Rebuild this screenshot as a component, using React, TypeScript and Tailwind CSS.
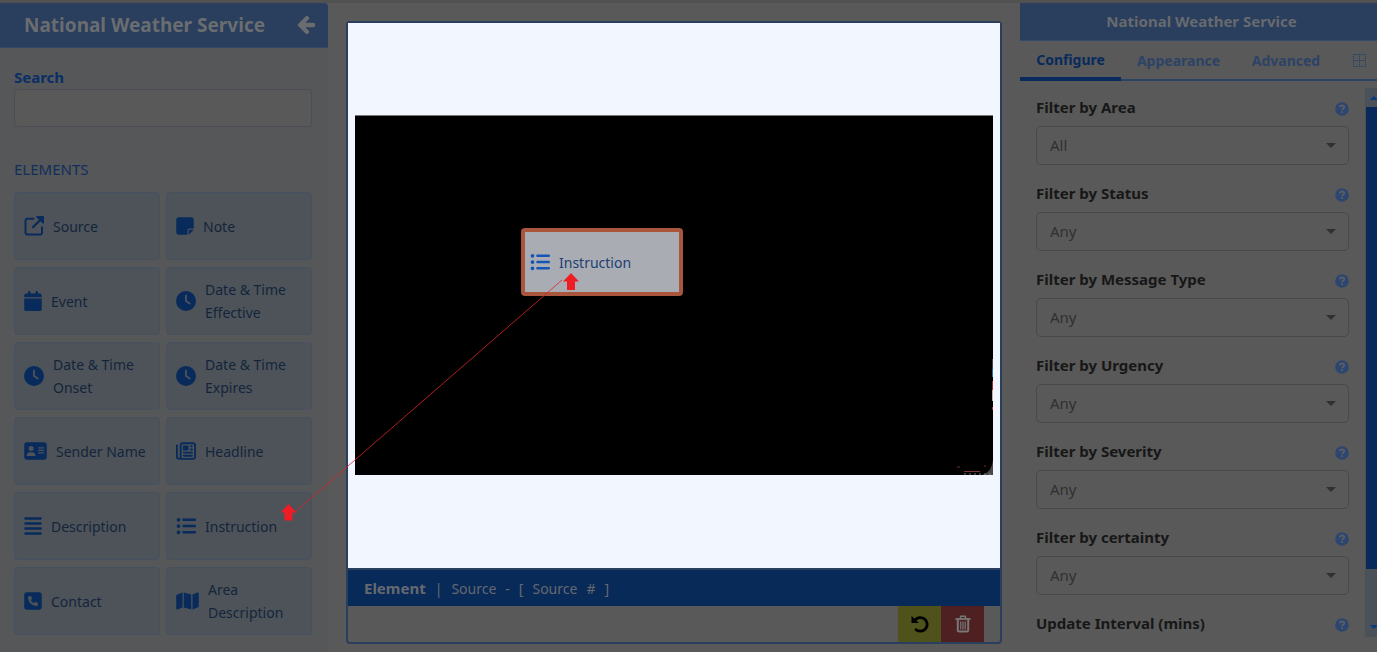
import type { ComponentType } from "react";
import {
  FaAddressCard,
  FaAlignJustify,
  FaCalendar,
  FaClock,
  FaListUl,
  FaMap,
  FaNoteSticky,
  FaRegNewspaper,
  FaSquarePhone,
} from "react-icons/fa6";

type Icon = ComponentType<{ className?: string }>;

function ExternalLinkIcon({ className }: { className?: string }) {
  return (
    <svg viewBox="0 0 20 20" className={className} fill="none" aria-hidden="true">
      <path
        d="M9.500 2.700H3.300A1.800 1.800 0 0 0 1.500 4.500v12.200a1.800 1.800 0 0 0 1.800 1.800h12.900a1.800 1.800 0 0 0 1.800-1.800v-5.500"
        stroke="currentColor"
        strokeWidth="2"
        strokeLinecap="round"
      />
      <path d="M9 11.200 17 3.200" stroke="currentColor" strokeWidth="2.200" strokeLinecap="round" />
      <path d="M12.800 0H19q1 0 1 1v6.200q-.300 1-1.200.400L12.400 1.200Q11.900.300 12.800 0Z" fill="currentColor" />
    </svg>
  );
}

const elements: { label: string; icon: Icon; width: string }[] = [
  { label: "Source", icon: ExternalLinkIcon, width: "w-5" },
  { label: "Note", icon: FaNoteSticky, width: "w-[18px]" },
  { label: "Event", icon: FaCalendar, width: "w-[18px]" },
  { label: "Date & Time Effective", icon: FaClock, width: "w-5" },
  { label: "Date & Time Onset", icon: FaClock, width: "w-5" },
  { label: "Date & Time Expires", icon: FaClock, width: "w-5" },
  { label: "Sender Name", icon: FaAddressCard, width: "w-[23px]" },
  { label: "Headline", icon: FaRegNewspaper, width: "w-5" },
  { label: "Description", icon: FaAlignJustify, width: "w-[18px]" },
  { label: "Instruction", icon: FaListUl, width: "w-5" },
  { label: "Contact", icon: FaSquarePhone, width: "w-[18px]" },
  { label: "Area Description", icon: FaMap, width: "w-[23px]" },
];

const filters = [
  { id: "area", label: "Filter by Area", value: "All" },
  { id: "status", label: "Filter by Status", value: "Any" },
  { id: "message-type", label: "Filter by Message Type", value: "Any" },
  { id: "urgency", label: "Filter by Urgency", value: "Any" },
  { id: "severity", label: "Filter by Severity", value: "Any" },
  { id: "certainty", label: "Filter by certainty", value: "Any" },
];

function ElementsPanel() {
  return (
    <aside className="flex w-[328px] shrink-0 flex-col rounded-tr bg-[#555759]">
      <header className="flex h-[45px] items-center justify-between rounded-tr border-b border-[#344661] bg-[#2a3e5d] pr-[13px] pl-6 text-[#6a6d70]">
        <h1 className="text-[19px] font-bold whitespace-nowrap">National Weather Service</h1>
        <button aria-label="Back">
          <svg viewBox="0 -64 1536 1536" className="size-[18px]" fill="currentColor" aria-hidden="true">
            <path d="M1536 640v128q0 53-32.500 90.500t-84.500 37.500h-704l293 294q38 36 38 90t-38 90l-75 76q-37 37-90 37-52 0-91-37l-651-652q-37-37-37-90 0-52 37-91l651-650q38-38 91-38 52 0 90 38l75 74q38 38 38 91t-38 91l-293 293h704q52 0 84.500 37.500t32.500 90.500z" />
          </svg>
        </button>
      </header>
      <div className="pt-[17px] pr-4 pl-[14px]">
        <label htmlFor="search" className="block text-[15px] leading-6 font-bold text-[#0a2f66]">
          Search
        </label>
        <input
          id="search"
          type="text"
          className="block h-[38px] w-full rounded border border-[#4b4e52] bg-[#595959] px-3 text-[15px] text-[#222] outline-none"
        />
        <h2 className="mt-[30px] text-[15px] leading-6 text-[#122f5c]">ELEMENTS</h2>
        <div className="mt-[11px] grid grid-cols-2 gap-x-[6px] gap-y-[7px]">
          {elements.map(({ label, icon: Glyph, width }) => (
            <button
              key={label}
              className="flex h-[68px] items-center gap-[9px] rounded border border-[#465160] bg-[#4d5359] pr-2 pl-[9px] text-left text-[14px] leading-[23px] text-[#14253b]"
            >
              <Glyph className={`h-5 shrink-0 text-[#082b5c] ${width}`} />
              <span>{label}</span>
            </button>
          ))}
        </div>
      </div>
    </aside>
  );
}

function Workspace() {
  return (
    <main className="mx-[18px] mt-[18px] mb-2 flex min-w-0 flex-1 flex-col rounded border-2 border-[#2a3e5d]">
      <div className="flex flex-1 flex-col bg-[#f2f7ff] px-[7px] pt-[92px] pb-[93px]">
        <div className="relative flex-1 border-t border-[#777] bg-black">
          <div className="absolute top-[112px] left-[166px] flex h-[68px] w-[162px] items-center gap-[9px] rounded border-4 border-[#a9563d] bg-[#a9adb3] pl-[5px] text-[14px] text-[#1d3d73]">
            <FaListUl className="size-5 text-[#1455b5]" />
            <span>Instruction</span>
          </div>
          <svg className="absolute right-0 bottom-0 h-[120px] w-10" viewBox="0 0 40 120" aria-hidden="true">
            <path d="M39.500 4v10" stroke="#444" />
            <path d="M39.500 14v8" stroke="#2f6a9c" />
            <path d="M39.500 26v9" stroke="#a32b2b" />
            <path d="M39.500 35v11" stroke="#b8b2a8" />
            <path d="M39.500 52v3" stroke="#a32b2b" />
            <path d="M40 105v15h-11q10-3 11-15Z" fill="#484848" />
            <path d="M11 116.500h16" stroke="#7c3434" />
            <path d="M11 119h28" stroke="#777" strokeDasharray="2 3" />
            <path d="M4 112h3M31 111h2" stroke="#6b3030" />
          </svg>
        </div>
      </div>
      <div className="flex h-[38px] items-center gap-[9px] border-t-2 border-[#2a3e5d] bg-[#082a59] px-4 text-[14px] text-[#65696f]">
        <strong className="text-[15px] font-bold">Element</strong>
        <span>|</span>
        <span>Source</span>
        <span>-</span>
        <span>[</span>
        <span>Source</span>
        <span>#</span>
        <span>]</span>
      </div>
      <div className="flex h-9 justify-end pr-4">
        <button aria-label="Undo" className="flex w-[43px] items-center justify-center bg-[#4f521a] text-black">
          <svg viewBox="0 0 20 20" className="size-5" fill="none" aria-hidden="true">
            <path d="M4.500 7A6.800 6.800 0 1 1 5.200 14.800" stroke="currentColor" strokeWidth="2.800" />
            <path d="M1.500 1.800V9h7.300Z" fill="currentColor" />
          </svg>
        </button>
        <button aria-label="Delete" className="flex w-[43px] items-center justify-center bg-[#4e2022] text-[#777]">
          <svg viewBox="0 0 16 18" className="h-[18px] w-4" fill="none" stroke="currentColor" aria-hidden="true">
            <path d="M.500 4h15" strokeWidth="1.800" />
            <path d="M5 4l.800-2.800h4.400L11 4" strokeWidth="1.500" />
            <path d="M2.800 4v11q0 1.500 1.500 1.500h7.400q1.500 0 1.500-1.500V4" strokeWidth="2" />
            <path d="M5.800 6.500v8M8 6.500v8M10.200 6.500v8" strokeWidth="1.200" />
          </svg>
        </button>
      </div>
    </main>
  );
}

function HelpButton({ about }: { about: string }) {
  return (
    <button aria-label={`Help: ${about}`} className="pt-1">
      <svg viewBox="0 0 14 14" className="size-[14px]" fill="none" aria-hidden="true">
        <circle cx="7" cy="7" r="6.800" fill="#2c4670" />
        <path d="M4.800 5.400Q5 3.500 7 3.500q2.200 0 2.200 1.900c0 1.400-2.100 1.400-2.100 2.900" stroke="#5b5e63" strokeWidth="1.800" />
        <path d="M6.100 9.300H8v1.800H6.100Z" fill="#5b5e63" />
      </svg>
    </button>
  );
}

function SettingsPanel() {
  return (
    <aside className="flex w-[357px] shrink-0 flex-col">
      <header className="flex h-[38px] items-center justify-center border-b border-[#344b70] bg-[#2a3e5d] pl-[6px]">
        <h2 className="text-[15px] font-bold text-[#676a6e]">National Weather Service</h2>
      </header>
      <nav className="flex h-10 border-b-2 border-[#2c4367] text-[14px] font-bold text-[#2c4367]">
        <a href="#configure" className="-mb-[2px] flex w-[101px] items-center justify-center border-b-4 border-[#082a5c] text-[#082a5c]">
          Configure
        </a>
        <a href="#appearance" className="flex w-[115px] items-center justify-center">
          Appearance
        </a>
        <a href="#advanced" className="flex w-[100px] items-center justify-center">
          Advanced
        </a>
        <a href="#grid" aria-label="Grid" className="flex flex-1 items-center justify-center pl-[6px]">
          <svg viewBox="0 0 13 13" className="size-[13px]" stroke="currentColor" aria-hidden="true">
            <path
              d="M0 .500h13M0 6.500h13M0 12.500h13M.500 0v13M6.500 0v13M12.500 0v13"
              strokeDasharray="1.400 .600"
            />
          </svg>
        </a>
      </nav>
      <div className="flex min-h-0 flex-1">
        <form className="flex min-w-0 flex-1 flex-col gap-4 overflow-hidden pt-[14px] pr-4 pl-4">
          {filters.map(({ id, label, value }) => (
            <div key={id} className="shrink-0">
              <div className="flex h-6 items-center justify-between">
                <label htmlFor={id} className="text-[15px] leading-6 font-bold text-[#171717]">
                  {label}
                </label>
                <HelpButton about={label} />
              </div>
              <div className="relative mt-[7px]">
                <select
                  id={id}
                  className="block h-[39px] w-full appearance-none rounded-[5px] border border-[#494949] bg-[#595959] px-[13px] text-[15px] text-[#303030] outline-none"
                >
                  <option>{value}</option>
                </select>
                <svg className="pointer-events-none absolute top-[17px] right-[13px] h-[5px] w-[10px]" viewBox="0 0 10 5" aria-hidden="true">
                  <path d="M0 0h10L5 5Z" fill="#303030" />
                </svg>
              </div>
            </div>
          ))}
          <div className="flex h-6 shrink-0 items-center justify-between">
            <h3 className="text-[15px] leading-6 font-bold text-[#171717]">Update Interval (mins)</h3>
            <HelpButton about="Update Interval (mins)" />
          </div>
        </form>
        <div className="mt-[7px] mb-[15px] flex w-3 flex-col overflow-hidden bg-[#4a5159]">
          <svg className="h-[19px] w-[18px] shrink-0" viewBox="0 0 18 19" aria-hidden="true">
            <path d="M5 12h8L9 8Z" fill="#0a3a80" />
          </svg>
          <div className="ml-px flex-[462] bg-[#082a5a]" />
          <div className="flex-[49]" />
          <svg className="h-[19px] w-[18px] shrink-0" viewBox="0 0 18 19" aria-hidden="true">
            <path d="M5 7h8L9 11Z" fill="#0a3a80" />
          </svg>
        </div>
      </div>
    </aside>
  );
}

function DragHint() {
  return (
    <svg className="pointer-events-none absolute top-[270px] left-[280px] h-[252px] w-[302px]" viewBox="280 270 302 252" aria-hidden="true">
      <path d="M294 513 562 280" stroke="#e0222a" strokeWidth="0.800" />
      <path d="M288.500 504l8 8.500h-4v8h-8v-8h-4Z" fill="#f01c24" />
      <path d="M571 273l8 8.500h-4v8.500h-8v-8.500h-4Z" fill="#f01c24" />
    </svg>
  );
}

export default function App() {
  return (
    <div className="relative flex h-screen min-h-[652px] overflow-hidden border-t-[3px] border-[#515151] bg-[#595959] font-['Noto_Sans',sans-serif]">
      <ElementsPanel />
      <Workspace />
      <SettingsPanel />
      <div className="absolute -top-[3px] left-0">
        <DragHint />
      </div>
    </div>
  );
}
